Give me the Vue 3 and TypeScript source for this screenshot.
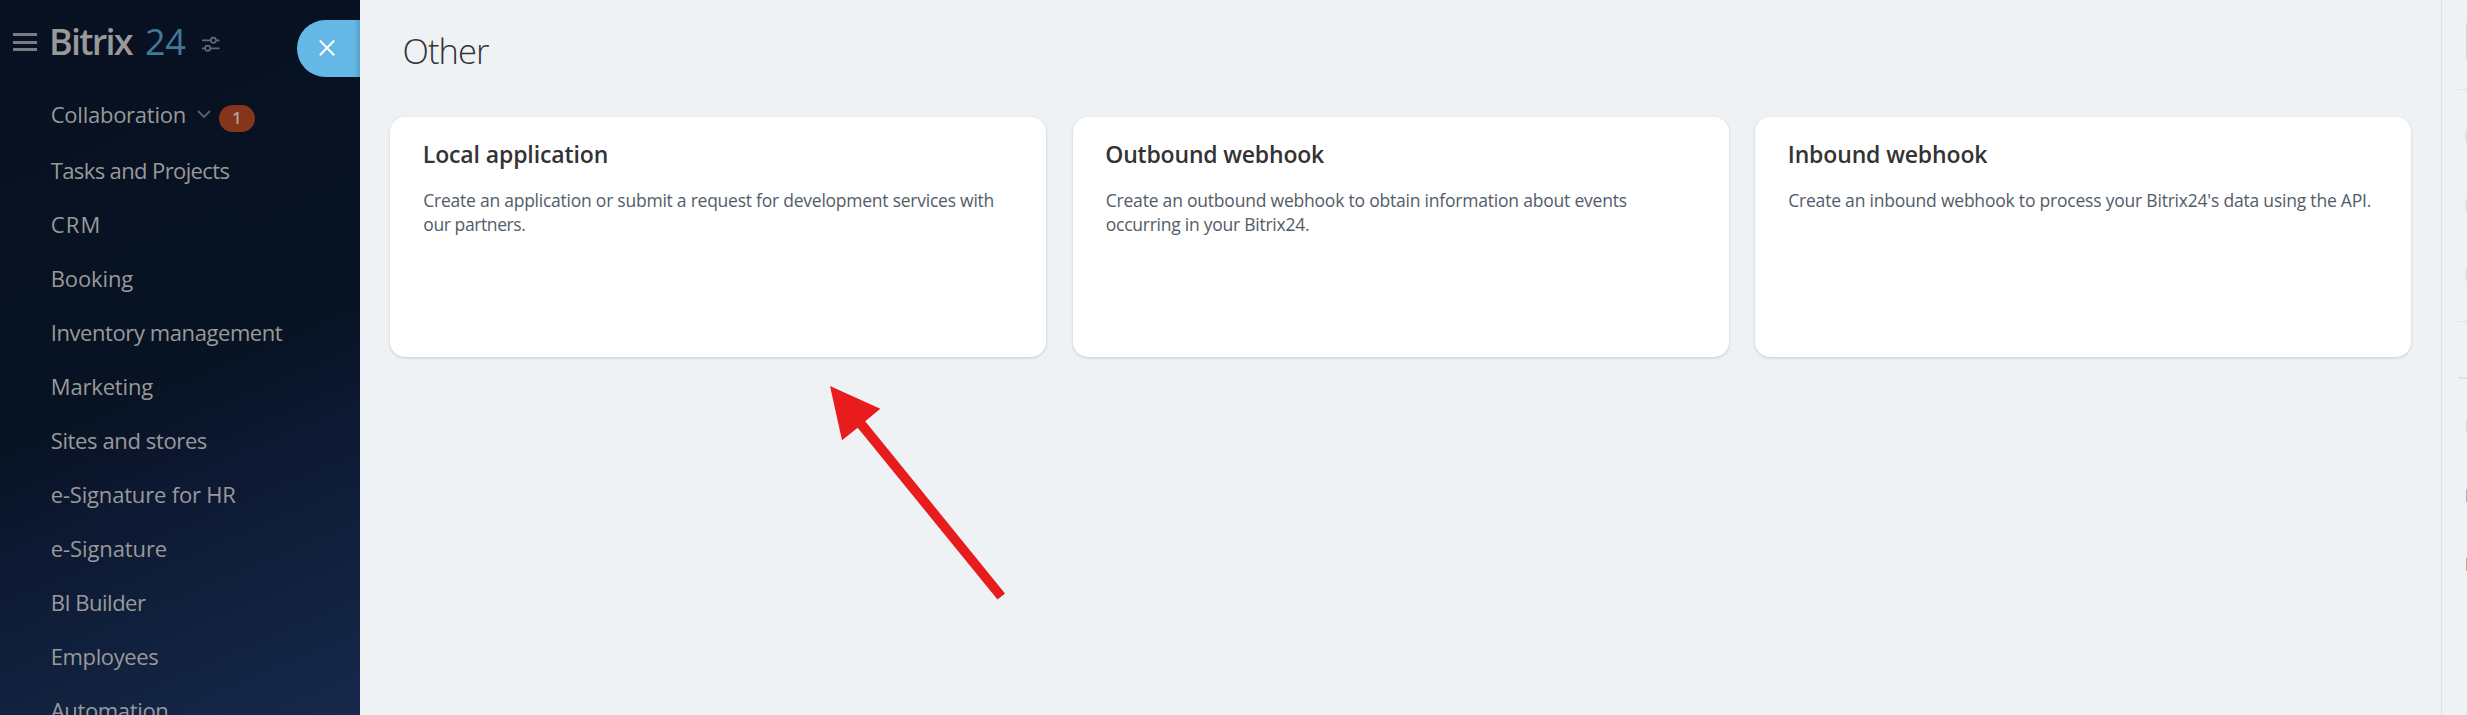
<script setup lang="ts">
interface MenuItem {
  label: string
  tracking: number
  badge?: number
}

interface Tile {
  title: string
  tracking: number
  lines: { text: string; tracking: number }[]
}

const menu: MenuItem[] = [
  { label: 'Collaboration', tracking: -0.25, badge: 1 },
  { label: 'Tasks and Projects', tracking: -0.62 },
  { label: 'CRM', tracking: 1.1 },
  { label: 'Booking', tracking: -0.13 },
  { label: 'Inventory management', tracking: -0.42 },
  { label: 'Marketing', tracking: -0.16 },
  { label: 'Sites and stores', tracking: -0.38 },
  { label: 'e-Signature for HR', tracking: -0.18 },
  { label: 'e-Signature', tracking: -0.1 },
  { label: 'BI Builder', tracking: -0.5 },
  { label: 'Employees', tracking: -0.38 },
  { label: 'Automation', tracking: -0.35 },
]

const tiles: Tile[] = [
  {
    title: 'Local application',
    tracking: -0.12,
    lines: [
      { text: 'Create an application or submit a request for development services with', tracking: -0.24 },
      { text: 'our partners.', tracking: -0.4 },
    ],
  },
  {
    title: 'Outbound webhook',
    tracking: -0.19,
    lines: [
      { text: 'Create an outbound webhook to obtain information about events', tracking: -0.21 },
      { text: 'occurring in your Bitrix24.', tracking: -0.25 },
    ],
  },
  {
    title: 'Inbound webhook',
    tracking: -0.14,
    lines: [
      { text: "Create an inbound webhook to process your Bitrix24's data using the API.", tracking: -0.21 },
    ],
  },
]

const spacing = (value: number) => ({ letterSpacing: `${value}px` })
</script>

<template>
  <div class="page">
    <aside class="sidebar">
      <header class="brand">
        <svg class="burger" width="24" height="18" viewBox="0 0 24 18">
          <path d="M0 1.5h24M0 9.5h24M0 16.5h24" stroke="#7b7d86" stroke-width="3" />
        </svg>
        <span class="brand-name">Bitrix</span>
        <span class="brand-num">24</span>
        <svg class="sliders" width="18" height="16" viewBox="0 0 18 16" fill="none" stroke="#65666f" stroke-width="1.7">
          <path d="M0 4.3h8.6M14.2 4.3H17.5M0 12.3h3M8.6 12.3h8.9" />
          <circle cx="11.4" cy="4.3" r="2.6" />
          <circle cx="5.7" cy="12.3" r="2.6" />
        </svg>
      </header>
      <nav class="menu">
        <div v-for="item in menu" :key="item.label" class="menu-item">
          <span :style="spacing(item.tracking)">{{ item.label }}</span>
          <template v-if="item.badge">
            <svg class="chevron" width="14" height="9" viewBox="0 0 14 9" fill="none">
              <path d="M1 1l6 6 6-6" stroke="#5c606b" stroke-width="1.8" />
            </svg>
            <span class="badge">{{ item.badge }}</span>
          </template>
        </div>
      </nav>
      <button class="close" type="button" aria-label="Close">
        <svg width="16" height="16" viewBox="0 0 16 16">
          <path d="M.8.6l14.4 14.6M15.2.6L.8 15.2" stroke="#fff" stroke-width="2.1" />
        </svg>
      </button>
    </aside>

    <main class="content">
      <h1>Other</h1>
      <section class="tiles">
        <article v-for="tile in tiles" :key="tile.title" class="tile">
          <h2 :style="spacing(tile.tracking)">{{ tile.title }}</h2>
          <p>
            <span v-for="line in tile.lines" :key="line.text" :style="spacing(line.tracking)">{{ line.text }}</span>
          </p>
        </article>
      </section>
    </main>

    <aside class="rail">
      <svg width="25" height="715" viewBox="0 0 25 715">
        <path d="M16 89.5h9M16 321.5h9" stroke="#dfe3e6" />
        <path d="M16 378h9" stroke="#dfe3e6" stroke-width="2" />
        <rect x="24" y="21" width="20" height="40" rx="4" fill="#d3d6d8" />
        <circle cx="41.6" cy="136.5" r="18.6" fill="#dde1e4" />
        <circle cx="41.6" cy="205.5" r="18.6" fill="#dde1e4" />
        <circle cx="41.6" cy="274.5" r="18.6" fill="#dde1e4" />
        <rect x="24" y="419" width="1" height="13" fill="#c0e9cf" />
        <rect x="24" y="489" width="1" height="13" fill="#b4adb9" />
        <rect x="24" y="558" width="1" height="13" fill="#d99a8f" />
      </svg>
    </aside>

    <svg class="arrow" width="178" height="218" viewBox="0 0 178 218">
      <path d="M0 0L50.3 22.7 35.2 35.3 175 207.4 167.5 213.5 27.7 41.8 12 54.2z" fill="#e81c1c" />
    </svg>
  </div>
</template>

<style>
body {
  margin: 0;
  overflow: hidden;
}
</style>

<style scoped>
.page {
  position: relative;
  display: flex;
  width: 2467px;
  height: 715px;
  overflow: hidden;
  background: #eef2f5;
  font-family: "Open Sans", "Noto Sans", sans-serif;
}

.sidebar {
  position: relative;
  flex: 0 0 360px;
  overflow: hidden;
  background: linear-gradient(157deg, #071122 0%, #071222 50%, #0d1832 64%, #10203c 80%, #17284c 100%);
  color: #999;
}

.brand {
  display: flex;
  align-items: center;
  height: 60px;
  padding: 12px 0 15px 13px;
  font-size: 36px;
  line-height: 60px;
}

.burger {
  margin-right: 12px;
}

.brand-name {
  width: 96px;
  font-weight: 650;
  letter-spacing: -1.75px;
}

.brand-num {
  width: 57px;
  color: #417996;
  font-weight: 500;
  letter-spacing: -0.3px;
}

.sliders {
  margin-top: 4px;
}

.menu-item {
  display: flex;
  align-items: center;
  height: 54px;
  padding-left: 50.75px;
  font-size: 22px;
  line-height: 54px;
  white-space: nowrap;
}

.menu-item:first-child {
  margin-bottom: 2px;
}

.chevron {
  margin: 0 8px 0 11px;
}

.badge {
  width: 36px;
  height: 27px;
  margin-top: 8px;
  border-radius: 14px;
  background: #84351c;
  color: #aca19d;
  font-size: 17px;
  font-weight: 600;
  line-height: 26px;
  text-align: center;
}

.close {
  position: absolute;
  top: 20px;
  right: 0;
  display: flex;
  align-items: center;
  width: 63px;
  height: 57px;
  padding: 0 0 1px 22px;
  border: 0;
  border-radius: 28.5px 0 0 28.5px;
  background: linear-gradient(270deg, #56a0c9 0, #63b8e6 6px);
}

.content {
  flex: 0 0 2021px;
  padding: 26px 30px 0;
}

h1 {
  height: 50px;
  margin: 0 0 41px 12.5px;
  color: #333;
  font-size: 34.5px;
  font-weight: 300;
  line-height: 50px;
  letter-spacing: -0.9px;
}

.tiles {
  display: grid;
  grid-template-columns: repeat(3, 1fr);
  gap: 26.5px;
}

.tile {
  box-sizing: border-box;
  height: 240px;
  padding: 22px 32px 22px 32.75px;
  border-radius: 15px;
  background: #fff;
  box-shadow: 0 1px 3px rgba(0, 0, 0, 0.17);
}

h2 {
  margin: 0 0 19px;
  color: #333;
  font-size: 23px;
  font-weight: 600;
  line-height: 30px;
}

p {
  margin: 0 0 0 0.5px;
  color: #525c69;
  font-size: 17.5px;
  line-height: 24px;
}

p span {
  display: block;
  white-space: nowrap;
}

.rail {
  flex: 0 0 25px;
  border-left: 1px solid #dde1e5;
}

.rail svg {
  display: block;
}

.arrow {
  position: absolute;
  top: 385.5px;
  left: 830px;
}
</style>
